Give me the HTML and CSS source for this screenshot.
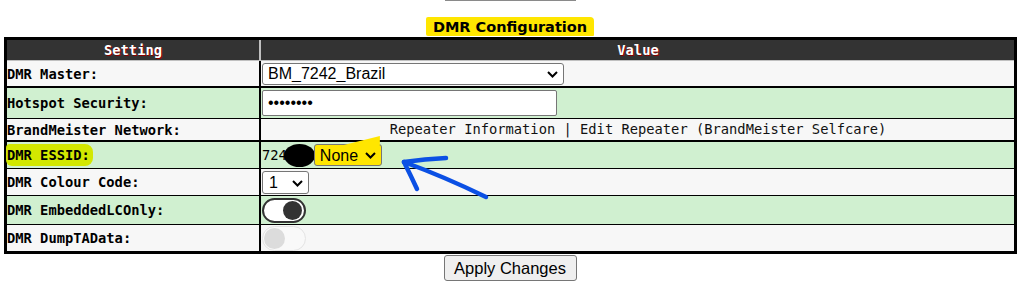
FILE: index.html
```html
<!doctype html>
<html>
    <head>
        <meta charset="utf-8">
        <title>DMR Configuration</title>
        <link rel="stylesheet" href="styles.css">
    </head>
    <body>
        <div class="page">
            <div class="prev-btn"></div>
            <h2 class="title"><span class="mark">DMR Configuration</span></h2>

            <div class="config">
                <div class="row head">
                    <div class="label">Setting</div>
                    <div class="value center">Value</div>
                </div>
                <div class="row light thick r-master">
                    <div class="label">DMR Master:</div>
                    <div class="value">
                        <span class="sel sel-master">
                            <select><option>BM_7242_Brazil</option></select>
                            <svg width="11" height="7" viewBox="0 0 11 7"><path d="M1 1 L5.5 5.5 L10 1" fill="none" stroke="#000" stroke-width="2"/></svg>
                        </span>
                    </div>
                </div>
                <div class="row green r-hotspot">
                    <div class="label">Hotspot Security:</div>
                    <div class="value"><input class="pass" type="password" value="12345678"></div>
                </div>
                <div class="row light thick r-bm">
                    <div class="label">BrandMeister Network:</div>
                    <div class="value center"><span class="links"><a href="#">Repeater Information</a> | <a href="#">Edit Repeater (BrandMeister Selfcare)</a></span></div>
                </div>
                <div class="row green r-essid">
                    <div class="label"><span class="hl">DMR ESSID:</span></div>
                    <div class="value">
                        <span>724</span><span class="redact"></span>
                        <span class="sel sel-essid">
                            <select><option>None</option></select>
                            <svg width="11" height="7" viewBox="0 0 11 7"><path d="M1 1 L5.5 5.5 L10 1" fill="none" stroke="#000" stroke-width="2"/></svg>
                        </span>
                    </div>
                </div>
                <div class="row light r-colour">
                    <div class="label">DMR Colour Code:</div>
                    <div class="value">
                        <span class="sel sel-cc">
                            <select><option>1</option></select>
                            <svg width="11" height="7" viewBox="0 0 11 7"><path d="M1 1 L5.5 5.5 L10 1" fill="none" stroke="#000" stroke-width="2"/></svg>
                        </span>
                    </div>
                </div>
                <div class="row green r-embedded">
                    <div class="label">DMR EmbeddedLCOnly:</div>
                    <div class="value"><label class="switch on"><input type="checkbox" checked><span class="knob"></span></label></div>
                </div>
                <div class="row light last r-dump">
                    <div class="label">DMR DumpTAData:</div>
                    <div class="value"><label class="switch off"><input type="checkbox" disabled><span class="knob"></span></label></div>
                </div>
            </div>

            <div class="actions"><button type="button">Apply Changes</button></div>

            <!-- annotation arrow drawn over the table -->
            <svg class="arrow" width="100" height="55" viewBox="0 0 100 55">
                <g fill="none" stroke="#0b50e4" stroke-width="4.5" stroke-linecap="round" stroke-linejoin="round">
                    <path d="M9 12 Q30 9 51 8"/>
                    <path d="M9 12 Q16 26 22 39"/>
                    <path d="M9 12 Q50 27 91 47"/>
                </g>
            </svg>
        </div>
    </body>
</html>
```

FILE: styles.css
```css
*{
    margin: 0;
    padding: 0;
    box-sizing: border-box;
}
body{
    background: #fff;
    font-family: "DejaVu Sans Mono", monospace;
    font-size: 13.75px;
    color: #000;
}
.page{
    position: relative;
}
.prev-btn{
    width: 131px;
    height: 1px;
    margin: 0 auto;
    background: #8a8a8a;
}
.title{
    margin-top: 16px;
    height: 20px;
    text-align: center;
    font-family: "DejaVu Sans", sans-serif;
    font-size: 14.5px;
    font-weight: bold;
    line-height: 20px;
}
.title .mark{
    display: inline-block;
    height: 19px;
    padding: 0 7px;
    background: #ffe600;
    border-radius: 2px 4px 1px 2px;
}

/* settings table */
.config{
    margin: 0 3px 0 4px;
    border: 3px solid #000;
}
.row{
    display: flex;
    align-items: stretch;
    border-bottom: 1px solid #000;
}
.row.thick{
    border-bottom-width: 2px;
}
.row.last{
    border-bottom: none;
}
.label{
    display: flex;
    align-items: center;
    width: 254px;
    flex: none;
    border-right: 2px solid #000;
    font-weight: bold;
}
.value{
    display: flex;
    align-items: center;
    flex: 1;
    padding-left: 1px;
}
.value.center{
    justify-content: center;
}
.light{
    background: #f7f7f7;
}
.green{
    background: #d0f0d0;
}
.head{
    height: 21px;
    background: #333;
    color: #fff;
    border-bottom: 1px solid #c0c0c0;
    text-shadow: 1px 1px #8b0000;
}
.head .label{
    justify-content: center;
    border-right-color: #c0c0c0;
}
.head .value{
    font-weight: bold;
}
.r-master{ height: 27px; }
.r-hotspot{ height: 31px; }
.r-bm{ height: 23px; }
.r-essid{ height: 27px; }
.r-colour{ height: 27px; }
.r-embedded{ height: 29px; }
.r-dump{ height: 26px; }

.links{
    white-space: pre;
    color: #111;
}
.value a{
    color: #111;
    text-decoration: none;
}
.r-bm .value{
    padding-bottom: 1px;
}

/* form controls */
.sel{
    position: relative;
    display: inline-block;
    height: 22px;
}
.sel select{
    -webkit-appearance: none;
    appearance: none;
    height: 22px;
    padding: 0 0 0 5px;
    border: 1px solid #767676;
    border-radius: 3px;
    background: #fff;
    color: #000;
    font-family: "Liberation Sans", Arial, sans-serif;
    font-size: 16px;
}
.sel svg{
    position: absolute;
    right: 6px;
    top: 8px;
    pointer-events: none;
}
.sel-master select{
    width: 302px;
}
.sel-cc{
    height: 23px;
}
.sel-cc select{
    width: 47px;
    height: 23px;
    padding-left: 6px;
}
.sel-cc svg{
    top: 9px;
}
.sel-essid{
    margin-left: -1px;
}
.sel-essid select{
    width: 68px;
    background: #ffe600;
}
.sel-essid::before{
    content: "";
    position: absolute;
    left: 30px;
    top: -8px;
    width: 36px;
    height: 9px;
    background: #ffe600;
    clip-path: polygon(0 100%, 100% 0, 100% 100%);
}
.pass{
    width: 295px;
    height: 26px;
    padding: 0 5px;
    border: 1px solid #767676;
    border-radius: 2px;
    background: #fff;
    font-family: "Liberation Sans", Arial, sans-serif;
    font-size: 16px;
    letter-spacing: 0;
}
.hl{
    display: inline-block;
    height: 22px;
    line-height: 22px;
    padding-right: 3px;
    margin-left: -1px;
    padding-left: 1px;
    background: #d2e800;
    border-radius: 4px 8px 8px 6px;
}
.redact{
    display: inline-block;
    width: 31px;
    height: 23px;
    margin-left: -3px;
    background: #000;
    border-radius: 50%;
}

/* toggle switches */
.switch{
    display: flex;
    align-items: center;
    width: 44px;
    height: 25px;
    border-radius: 13px;
    background: #fff;
}
.switch input{
    display: none;
}
.switch .knob{
    display: block;
    border-radius: 50%;
}
.switch.on{
    justify-content: flex-end;
    border: 2px solid #333;
    padding-right: 2px;
}
.switch.on .knob{
    width: 19px;
    height: 19px;
    background: #333;
}
.switch.off{
    border: 1px solid #e4e4e4;
    background: #f9f9f9;
    padding-left: 1px;
}
.switch.off .knob{
    width: 21px;
    height: 21px;
    background: #dcdcdc;
}

.actions{
    margin-top: 1px;
    text-align: center;
}
.actions button{
    width: 133px;
    height: 26px;
    border: 1px solid #767676;
    border-radius: 3px;
    background: #efefef;
    color: #000;
    font-family: "Liberation Sans", Arial, sans-serif;
    font-size: 16.5px;
}

.arrow{
    position: absolute;
    left: 395px;
    top: 150px;
}
```
